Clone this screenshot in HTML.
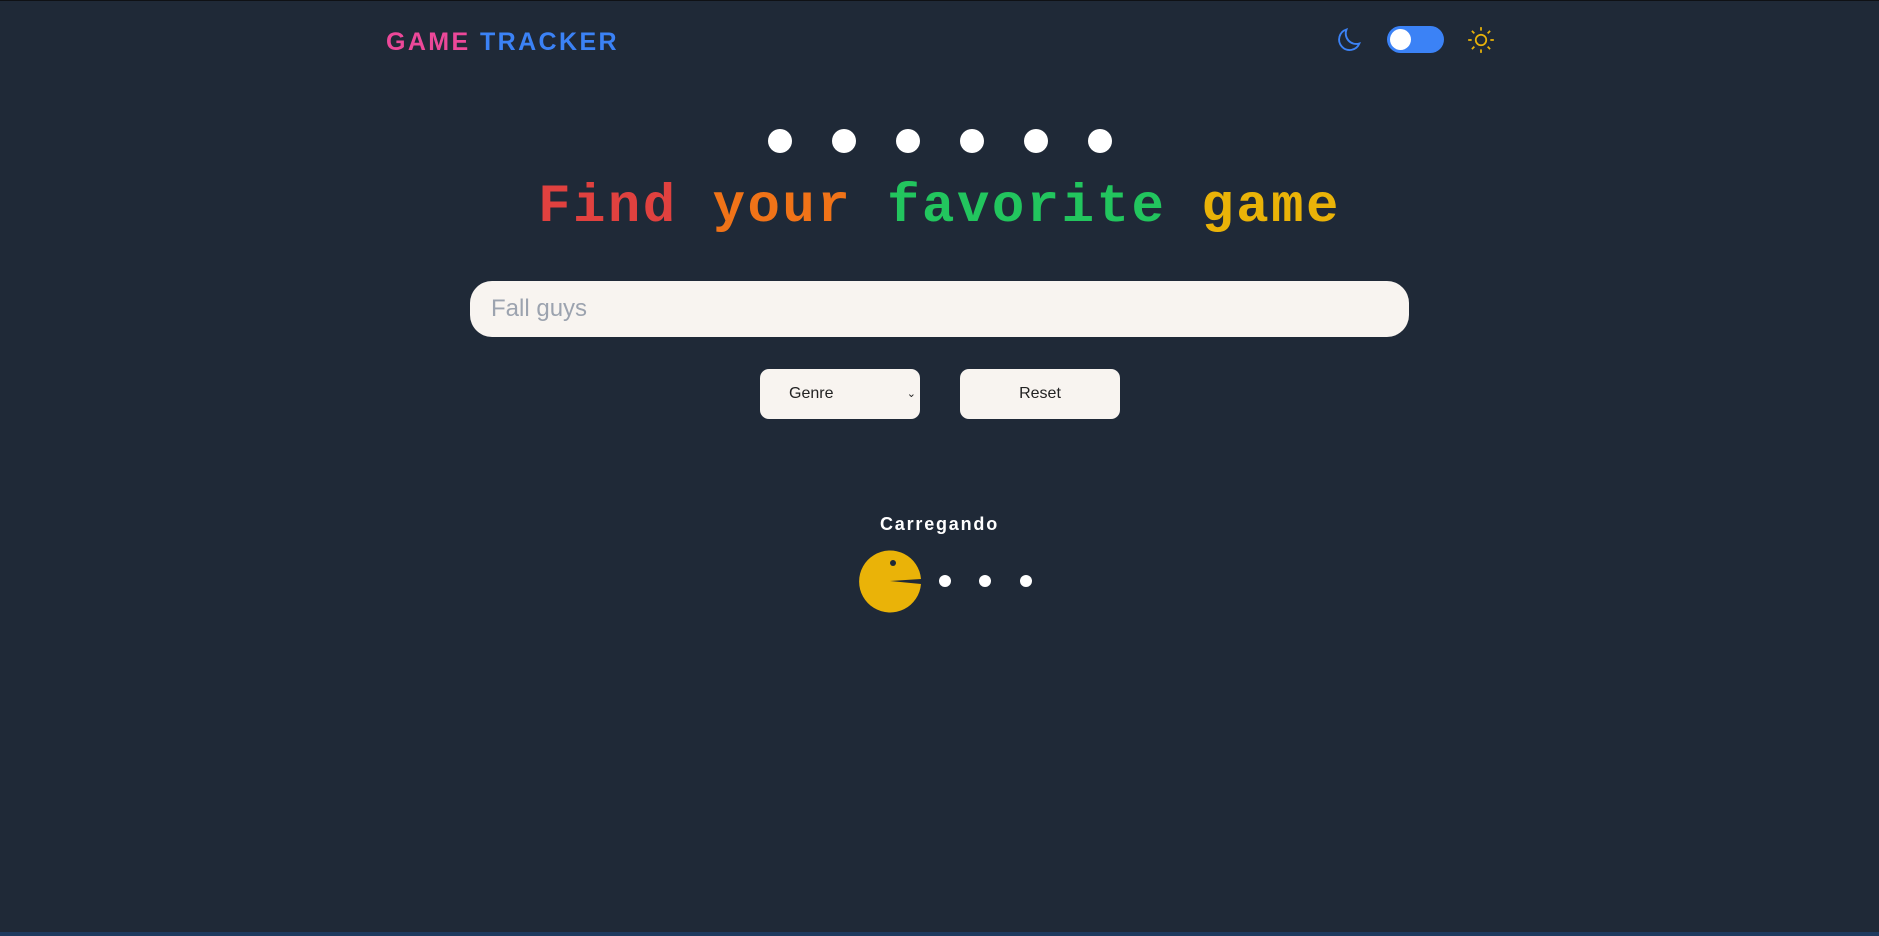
<!DOCTYPE html>
<html><head><meta charset="utf-8"><style>
html,body{margin:0;padding:0;width:1879px;height:936px;overflow:hidden;background:#1f2937;font-family:"Liberation Sans",sans-serif;position:relative}
.a{position:absolute}
.logo{left:386px;top:28px;font-size:25px;font-weight:900;letter-spacing:2.4px;white-space:nowrap}
.dot{width:24px;height:24px;border-radius:50%;background:#fff;top:129px}
.title{left:0;width:1879px;top:177px;text-align:center;font-size:54px;font-weight:bold;font-family:"Liberation Mono",monospace;letter-spacing:2.5px;white-space:nowrap}
.search{left:470px;top:281px;width:939px;height:56px;background:#f8f4f0;border-radius:22px}
.btn{top:369px;width:160px;height:50px;background:#f8f4f0;border-radius:9px;font-size:16px;color:#222;line-height:50px}
.pd{width:12px;height:12px;border-radius:50%;background:#fff;top:575px}
</style></head><body>
<div class="a" style="left:0;top:0;width:1879px;height:1px;background:#0f1115"></div>
<div class="a logo"><span style="color:#ec4899">GAME</span> <span style="color:#3b82f6">TRACKER</span></div>
<svg class="a" style="left:1336px;top:26px" width="28" height="28" viewBox="0 0 24 24" fill="none" stroke="#3b82f6" stroke-width="1.6"><path d="M20 15A9 9 0 0 1 9 3 9 9 0 1 0 20 15Z"/></svg>
<div class="a" style="left:1387px;top:26px;width:57px;height:27px;border-radius:14px;background:#3b82f6"></div>
<div class="a" style="left:1390px;top:29px;width:21px;height:21px;border-radius:50%;background:#fff"></div>
<svg class="a" style="left:1467px;top:26px" width="28" height="28" viewBox="0 0 24 24" fill="none" stroke="#eab308" stroke-width="1.5"><circle cx="12" cy="12" r="4.5"/><path d="M12 1v3M12 20v3M1 12h3M20 12h3M4.2 4.2l2.1 2.1M17.7 17.7l2.1 2.1M4.2 19.8l2.1-2.1M17.7 6.3l2.1-2.1"/></svg>
<div class="a dot" style="left:768px"></div><div class="a dot" style="left:832px"></div><div class="a dot" style="left:896px"></div><div class="a dot" style="left:960px"></div><div class="a dot" style="left:1024px"></div><div class="a dot" style="left:1088px"></div>
<div class="a title"><span style="color:#e0413f">Find</span> <span style="color:#f07318">your</span> <span style="color:#22c55e">favorite</span> <span style="color:#eab308">game</span></div>
<div class="a search"><span class="a" style="left:21px;top:14px;font-size:24px;color:#9ca3af">Fall guys</span></div>
<div class="a btn" style="left:760px"><span style="margin-left:29px">Genre</span><span class="a" style="right:4px;top:0;font-size:11px">&#8964;</span></div>
<div class="a btn" style="left:960px;text-align:center">Reset</div>
<div class="a" style="left:0;width:1879px;top:514px;text-align:center;color:#fff;font-weight:900;font-size:18px;letter-spacing:1.8px">Carregando</div>
<svg class="a" style="left:859px;top:549px" width="64" height="64" viewBox="0 0 64 64"><path d="M31 32 L62 30 A31 31 0 1 0 62 35 Z" fill="#eab308"/><circle cx="34" cy="14" r="3" fill="#1f2937"/></svg>
<div class="a pd" style="left:939px"></div><div class="a pd" style="left:979px"></div><div class="a pd" style="left:1020px"></div>
<div class="a" style="left:0;top:932px;width:1879px;height:4px;background:#1e3a5f"></div>
</body></html>
